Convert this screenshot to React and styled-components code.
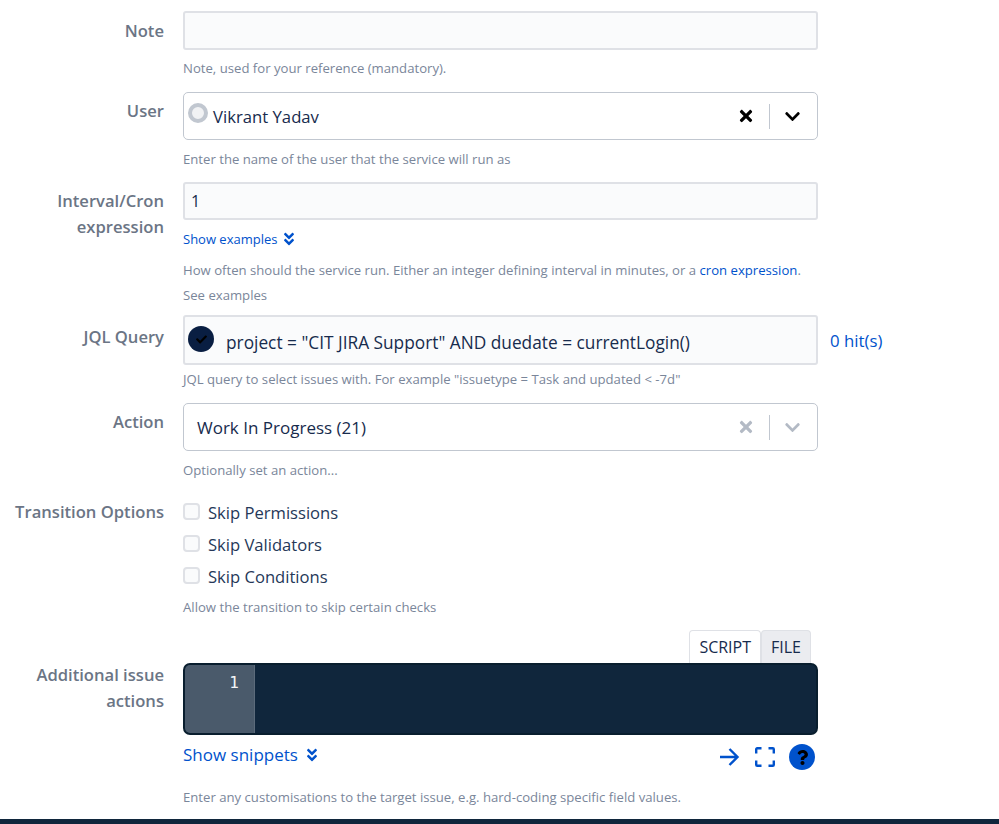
import React from "react";
import styled, { createGlobalStyle } from "styled-components";
import { FaCheck, FaTimes, FaChevronDown, FaAngleDoubleDown, FaQuestion } from "react-icons/fa";

const GlobalStyle = createGlobalStyle`
  html, body {
    margin: 0;
    padding: 0;
    background: #fff;
    font-family: "Open Sans", "Noto Sans", sans-serif;
  }
`;

const Page = styled.div`
  width: 999px;
  height: 824px;
  overflow: hidden;
  display: flex;
  flex-direction: column;
`;

const Form = styled.div`
  flex: 1;
  padding-top: 11px;
  display: flex;
  flex-direction: column;
`;

const Row = styled.div`
  display: grid;
  grid-template-columns: 164px 635px;
  column-gap: 19px;
  margin-bottom: ${(p) => p.$after || 0}px;
`;

const Label = styled.div`
  text-align: right;
  font-size: 16.6px;
  font-weight: 600;
  line-height: 26px;
  color: #6b7585;
  padding-top: ${(p) => p.$top || 0}px;
`;

const Field = styled.div`
  display: flex;
  flex-direction: column;
  min-width: 0;
`;

const Input = styled.div`
  box-sizing: border-box;
  height: ${(p) => p.$height}px;
  border: 2px solid #dfe1e6;
  border-radius: 3px;
  background: #fafbfc;
  display: flex;
  align-items: center;
  padding-left: 6px;
  font-size: 16px;
  color: #172b4d;
`;

const Select = styled.div`
  box-sizing: border-box;
  height: 48px;
  border: 1px solid #c1c7d0;
  border-radius: 5px;
  background: #fff;
  display: flex;
  align-items: center;
  padding-left: ${(p) => p.$pad}px;
  font-size: ${(p) => p.$size}px;
  color: #172b4d;
`;

const SelectValue = styled.span`
  flex: 1;
`;

const Controls = styled.div`
  display: flex;
  align-items: center;
  padding-right: 16px;
  color: ${(p) => (p.$muted ? "#b3bac5" : "#000")};
`;

const Divider = styled.span`
  width: 1px;
  height: 25px;
  margin: 0 14px 0 14px;
  background: #c1c7d0;
`;

const Help = styled.div`
  font-size: 13.15px;
  line-height: 18px;
  color: #7a869a;
  margin-top: ${(p) => p.$top || 0}px;
`;

const Link = styled.a`
  color: #0052cc;
`;

const ShowLink = styled.div`
  display: flex;
  align-items: center;
  color: #0052cc;
  font-size: ${(p) => p.$size}px;
  line-height: 24px;
  gap: ${(p) => p.$gap}px;
  margin-top: ${(p) => p.$top || 0}px;
`;

const UserAvatar = styled.span`
  box-sizing: border-box;
  width: 20px;
  height: 20px;
  margin: -7px 5px 0 1px;
  border-radius: 50%;
  border: 4px solid #c1c7d0;
  background: #f1f2f4;
`;

const StatusBadge = styled.span`
  width: 26px;
  height: 26px;
  margin: -6px 12px 0 -3px;
  border-radius: 50%;
  background: #091e42;
  color: #000;
  display: flex;
  align-items: center;
  justify-content: center;
  font-size: 11px;
`;

const QueryRow = styled.div`
  display: flex;
  align-items: flex-start;
`;

const QueryInput = styled(Input)`
  flex: 0 0 635px;
  padding-top: 4px;
  font-size: 17.3px;
`;

const Hits = styled.span`
  position: absolute;
  margin-left: 647px;
  margin-top: 14px;
  font-size: 16.8px;
  color: #0052cc;
`;

const CheckRow = styled.label`
  display: flex;
  align-items: center;
  height: 32px;
  gap: 8px;
  font-size: 16.6px;
  color: #253858;
`;

const CheckBox = styled.span`
  box-sizing: border-box;
  width: 17px;
  height: 17px;
  margin-top: -1px;
  border: 2px solid #dfe1e6;
  border-radius: 4px;
  background: #fafbfc;
`;

const Tabs = styled.div`
  display: flex;
  justify-content: flex-end;
  padding-right: 7px;
  height: 33px;
`;

const Tab = styled.div`
  box-sizing: border-box;
  height: 33px;
  padding: 0 9px;
  border: 1px solid #dfe1e6;
  border-bottom: none;
  border-radius: 4px 4px 0 0;
  background: ${(p) => (p.$active ? "#fff" : "#ebecf0")};
  font-size: 16px;
  line-height: 32px;
  color: #172b4d;
`;

const Editor = styled.div`
  box-sizing: border-box;
  height: 72px;
  border: 2px solid #091e2e;
  border-radius: 7px;
  background: #10263c;
  overflow: hidden;
  display: flex;
`;

const Gutter = styled.div`
  width: 70px;
  background: #4a5a6b;
  border-right: 1px solid #5c6b7b;
  color: #f4f5f7;
  font-family: "DejaVu Sans Mono", monospace;
  font-size: 16px;
  line-height: 20px;
  padding-top: 8px;
  padding-right: 15px;
  box-sizing: border-box;
  text-align: right;
`;

const EditorFoot = styled.div`
  display: flex;
  justify-content: space-between;
  align-items: center;
  height: 44px;
`;

const Tools = styled.div`
  display: flex;
  align-items: center;
  gap: 14px;
  padding-right: 3px;
  color: #0052cc;
`;

const HelpButton = styled.span`
  width: 26px;
  height: 26px;
  border-radius: 50%;
  background: #0052cc;
  color: #000;
  display: flex;
  align-items: center;
  justify-content: center;
  font-size: 15px;
`;

const FooterBar = styled.div`
  height: 5px;
  background: #10263c;
`;

const ArrowIcon = () => (
  <svg width="22" height="20" viewBox="0 0 22 20" fill="none" stroke="#0052cc" strokeWidth="2.4">
    <path d="M1 10h16M10.5 2l8 8-8 8" />
  </svg>
);

const FullscreenIcon = () => (
  <svg width="20" height="20" viewBox="0 0 20 20" fill="none" stroke="#0052cc" strokeWidth="2.4">
    <path d="M1.2 6.5V2.2a1 1 0 0 1 1-1h4.3M13.5 1.2h4.3a1 1 0 0 1 1 1v4.3M18.8 13.5v4.3a1 1 0 0 1-1 1h-4.3M6.5 18.8H2.2a1 1 0 0 1-1-1v-4.3" />
  </svg>
);

export default function App() {
  return (
    <Page>
      <GlobalStyle />
      <Form>
        <Row $after={15}>
          <Label $top={7}>Note</Label>
          <Field>
            <Input $height={39} />
            <Help $top={9}>Note, used for your reference (mandatory).</Help>
          </Field>
        </Row>
        <Row $after={14}>
          <Label $top={6}>User</Label>
          <Field>
            <Select $pad={3} $size={16.7}>
              <UserAvatar />
              <SelectValue>Vikrant Yadav</SelectValue>
              <Controls>
                <FaTimes size={18} />
                <Divider />
                <FaChevronDown size={17} />
              </Controls>
            </Select>
            <Help $top={10}>Enter the name of the user that the service will run as</Help>
          </Field>
        </Row>
        <Row $after={11}>
          <Label $top={6}>Interval/Cron expression</Label>
          <Field>
            <Input $height={38}>1</Input>
            <ShowLink $size={13} $gap={4} $top={7}>
              Show examples <FaAngleDoubleDown size={16} />
            </ShowLink>
            <Help $top={10}>
              How often should the service run. Either an integer defining interval in minutes, or a{" "}
              <Link>cron expression</Link>.
            </Help>
            <Help $top={7}>See examples</Help>
          </Field>
        </Row>
        <Row $after={15}>
          <Label $top={9}>JQL Query</Label>
          <Field>
            <QueryRow>
              <QueryInput $height={50}>
                <StatusBadge><FaCheck /></StatusBadge>
                project = "CIT JIRA Support" AND duedate = currentLogin()
              </QueryInput>
              <Hits>0 hit(s)</Hits>
            </QueryRow>
            <Help $top={5}>JQL query to select issues with. For example "issuetype = Task and updated &lt; -7d"</Help>
          </Field>
        </Row>
        <Row $after={17}>
          <Label $top={6}>Action</Label>
          <Field>
            <Select $pad={13} $size={17}>
              <SelectValue>Work In Progress (21)</SelectValue>
              <Controls $muted>
                <FaTimes size={18} />
                <Divider />
                <FaChevronDown size={17} />
              </Controls>
            </Select>
            <Help $top={10}>Optionally set an action...</Help>
          </Field>
        </Row>
        <Row $after={14}>
          <Label $top={3}>Transition Options</Label>
          <Field>
            <CheckRow><CheckBox />Skip Permissions</CheckRow>
            <CheckRow><CheckBox />Skip Validators</CheckRow>
            <CheckRow><CheckBox />Skip Conditions</CheckRow>
            <Help $top={6}>Allow the transition to skip certain checks</Help>
          </Field>
        </Row>
        <Row>
          <Label $top={32}>Additional issue actions</Label>
          <Field>
            <Tabs>
              <Tab $active>SCRIPT</Tab>
              <Tab>FILE</Tab>
            </Tabs>
            <Editor>
              <Gutter>1</Gutter>
            </Editor>
            <EditorFoot>
              <ShowLink $size={17} $gap={6} $top={-4}>
                Show snippets <FaAngleDoubleDown size={16} />
              </ShowLink>
              <Tools>
                <ArrowIcon />
                <FullscreenIcon />
                <HelpButton><FaQuestion /></HelpButton>
              </Tools>
            </EditorFoot>
            <Help $top={9}>Enter any customisations to the target issue, e.g. hard-coding specific field values.</Help>
          </Field>
        </Row>
      </Form>
      <FooterBar />
    </Page>
  );
}
